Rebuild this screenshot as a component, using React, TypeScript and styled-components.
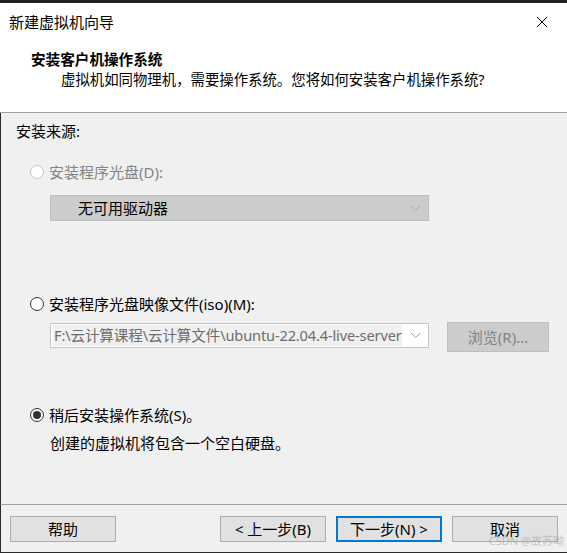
import styled, { createGlobalStyle } from "styled-components";

const GlobalStyle = createGlobalStyle`
  html, body {
    margin: 0;
    padding: 0;
    background: #1f1f1f;
  }
  * {
    box-sizing: border-box;
  }
`;

const font = `"Noto Sans", "Noto Sans CJK SC", sans-serif`;

const Screen = styled.div`
  position: relative;
  width: 567px;
  height: 553px;
  display: flex;
  flex-direction: column;
  font-family: ${font};
  font-size: 15px;
  color: #000;
  overflow: hidden;
`;

const BehindStrip = styled.div`
  height: 3px;
  background: #202020;
`;

const Dialog = styled.div`
  flex: 1;
  display: flex;
  flex-direction: column;
  background: #fff;
  border-bottom: 1px solid #2b2b2b;
`;

const TitleBar = styled.div`
  height: 37px;
  display: flex;
  align-items: center;
  justify-content: space-between;
  padding: 0 18px 0 9px;
`;

const TitleText = styled.span`
  font-size: 15px;
  line-height: 20px;
  padding-top: 1px;
`;

const CloseButton = styled.span`
  display: flex;
  width: 14px;
  height: 14px;
  align-items: center;
  justify-content: center;
`;

const Header = styled.div`
  height: 73px;
  padding: 9px 0 0 31px;
  border-bottom: 1px solid #a0a0a0;
  display: flex;
  flex-direction: column;
  gap: 1px;
`;

const HeaderTitle = styled.div`
  font-weight: bold;
  font-size: 14.6px;
  line-height: 20px;
`;

const HeaderSub = styled.div`
  font-size: 14.4px;
  line-height: 20px;
  padding-left: 30px;
`;

const Body = styled.div`
  flex: 1;
  background: #f0f0f0;
  border-left: 1px solid #2b2b2b;
  padding: 8px 0 0 15px;
  display: flex;
  flex-direction: column;
`;

const Line = styled.div<{ $top?: number; $indent?: number }>`
  line-height: 20px;
  height: 20px;
  margin-top: ${(p) => p.$top ?? 0}px;
  padding-left: ${(p) => p.$indent ?? 0}px;
  white-space: nowrap;
`;

const RadioRow = styled.div<{ $top: number; $disabled?: boolean }>`
  display: flex;
  align-items: center;
  gap: 5px;
  height: 20px;
  margin-top: ${(p) => p.$top}px;
  padding-left: 14px;
  color: ${(p) => (p.$disabled ? "#838383" : "#000")};
  line-height: 20px;
`;

const RadioCircle = styled.span<{ $checked?: boolean; $disabled?: boolean }>`
  width: 14px;
  height: 14px;
  border-radius: 50%;
  border: 1px solid ${(p) => (p.$disabled ? "#c2c2c2" : "#333")};
  background: #fff;
  display: flex;
  align-items: center;
  justify-content: center;
  flex-shrink: 0;

  &::after {
    content: "";
    display: ${(p) => (p.$checked ? "block" : "none")};
    width: 8px;
    height: 8px;
    border-radius: 50%;
    background: #333;
  }
`;

const Select = styled.div<{ $top: number }>`
  margin-top: ${(p) => p.$top}px;
  margin-left: 34px;
  width: 379px;
  height: 26px;
  background: #cccccc;
  border: 1px solid #bfbfbf;
  display: flex;
  align-items: center;
  justify-content: space-between;
  padding: 0 7px 0 27px;
  line-height: 20px;
`;

const ComboRow = styled.div`
  display: flex;
  align-items: flex-start;
  gap: 18px;
  margin-top: 8px;
  margin-left: 34px;
`;

const Combo = styled.div`
  margin-top: 1px;
  width: 379px;
  height: 25px;
  background: #fff;
  border: 1px solid #c6c6c6;
  display: flex;
  align-items: center;
  padding: 1px 7px 1px 2px;
  gap: 4px;
`;

const ComboField = styled.div`
  height: 21px;
  max-width: 354px;
  background: #f0f0f0;
  color: #6d6d6d;
  font-size: 14.6px;
  line-height: 21px;
  padding-left: 1px;
  white-space: nowrap;
  overflow: hidden;
  letter-spacing: -0.15px;
`;

const ComboSpacer = styled.div`
  flex: 1;
`;

const Chevron = styled.svg`
  flex-shrink: 0;
`;

const DisabledButton = styled.div`
  width: 102px;
  height: 30px;
  background: #cccccc;
  border: 1px solid #bfbfbf;
  color: #838383;
  display: flex;
  align-items: center;
  justify-content: center;
  line-height: 20px;
`;

const Footer = styled.div`
  height: 48px;
  background: #f0f0f0;
  border-top: 1px solid #a0a0a0;
  border-left: 1px solid #2b2b2b;
  display: flex;
  align-items: flex-start;
  padding: 11px 0 0 9px;
`;

const Button = styled.div<{ $primary?: boolean; $left?: number }>`
  width: 106px;
  height: 26px;
  margin-left: ${(p) => p.$left ?? 0}px;
  background: #e1e1e1;
  border: ${(p) => (p.$primary ? "2px solid #0078d7" : "1px solid #adadad")};
  display: flex;
  align-items: center;
  justify-content: center;
  line-height: 20px;
  white-space: nowrap;
`;

const Watermark = styled.span`
  position: absolute;
  right: 3px;
  bottom: 5px;
  font-size: 11px;
  line-height: 14px;
  color: rgba(150, 150, 150, 0.5);
  font-family: ${font};
  pointer-events: none;
`;

const ChevronIcon = ({ color }: { color: string }) => (
  <Chevron width="11" height="7" viewBox="0 0 11 7">
    <polyline points="1,1 5.5,5.5 10,1" fill="none" stroke={color} strokeWidth="1" />
  </Chevron>
);

export default function App() {
  return (
    <>
      <GlobalStyle />
      <Screen>
        <BehindStrip />
        <Dialog>
          <TitleBar>
            <TitleText>新建虚拟机向导</TitleText>
            <CloseButton>
              <svg width="12" height="12" viewBox="0 0 12 12">
                <path d="M1 1 L11 11 M11 1 L1 11" stroke="#000" strokeWidth="1" />
              </svg>
            </CloseButton>
          </TitleBar>
          <Header>
            <HeaderTitle>安装客户机操作系统</HeaderTitle>
            <HeaderSub>虚拟机如同物理机，需要操作系统。您将如何安装客户机操作系统?</HeaderSub>
          </Header>
          <Body>
            <Line>安装来源:</Line>
            <RadioRow $top={21} $disabled>
              <RadioCircle $disabled />
              安装程序光盘(D):
            </RadioRow>
            <Select $top={13}>
              <span>无可用驱动器</span>
              <ChevronIcon color="#a8a8a8" />
            </Select>
            <RadioRow $top={73}>
              <RadioCircle />
              安装程序光盘映像文件(iso)(M):
            </RadioRow>
            <ComboRow>
              <Combo>
                <ComboField>F:\云计算课程\云计算文件\ubuntu-22.04.4-live-server</ComboField>
                <ComboSpacer />
                <ChevronIcon color="#a0a0a0" />
              </Combo>
              <DisabledButton>浏览(R)...</DisabledButton>
            </ComboRow>
            <RadioRow $top={53}>
              <RadioCircle $checked />
              稍后安装操作系统(S)。
            </RadioRow>
            <Line $top={8} $indent={34}>
              创建的虚拟机将包含一个空白硬盘。
            </Line>
          </Body>
          <Footer>
            <Button>帮助</Button>
            <Button $left={104}>&lt; 上一步(B)</Button>
            <Button $left={10} $primary>
              下一步(N) &gt;
            </Button>
            <Button $left={10}>取消</Button>
          </Footer>
        </Dialog>
        <Watermark>CSDN @故苏呦</Watermark>
      </Screen>
    </>
  );
}
